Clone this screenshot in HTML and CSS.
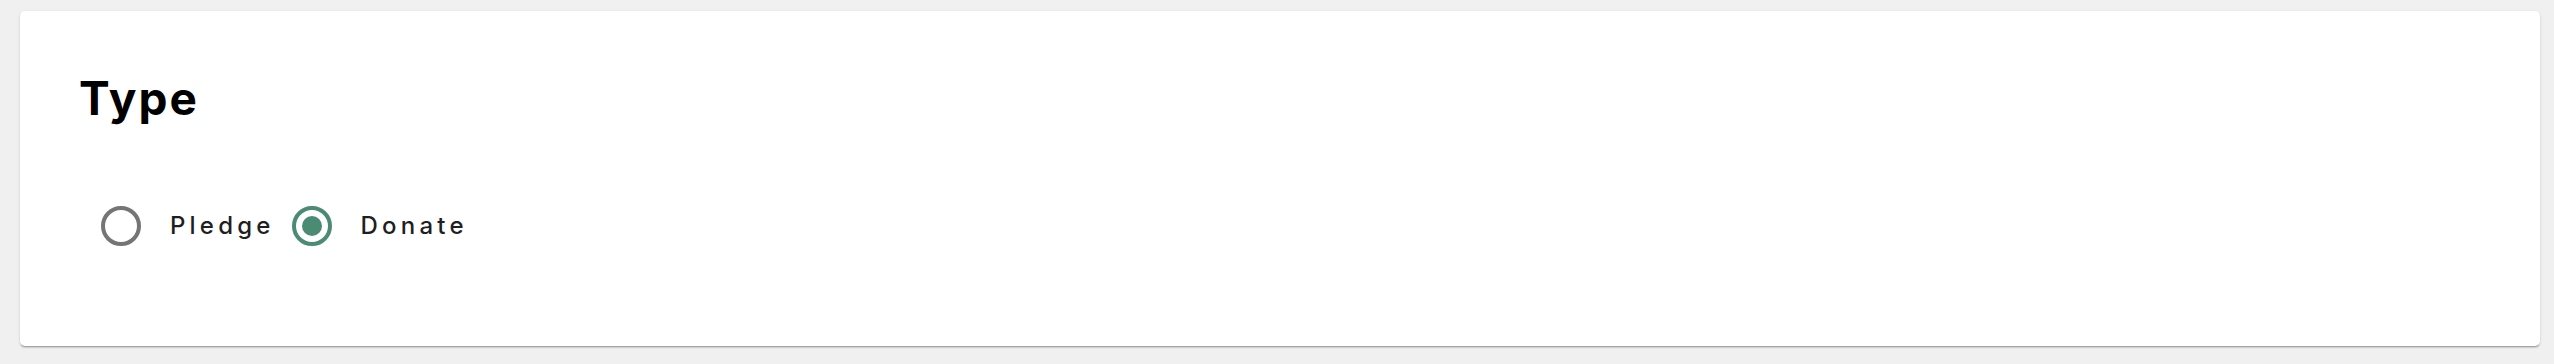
FILE: index.html
```html
<!DOCTYPE html>
<html lang="en">
<head>
<meta charset="utf-8">
<title>Type</title>
<link rel="stylesheet" href="styles.css">
</head>
<body>
<div class="page">
  <section class="card">
    <h2 class="title">Type</h2>
    <div class="radio-group" role="radiogroup">
      <label class="option">
        <svg class="radio" viewBox="0 0 48 48" width="48" height="48" aria-hidden="true">
          <circle cx="24" cy="24" r="18" fill="none" stroke="#757575" stroke-width="4"/>
        </svg>
        <span class="label">Pledge</span>
      </label>
      <label class="option">
        <svg class="radio" viewBox="0 0 48 48" width="48" height="48" aria-hidden="true">
          <circle cx="24" cy="24" r="18" fill="none" stroke="#4a8b74" stroke-width="4"/>
          <circle cx="24" cy="24" r="10" fill="#4a8b74"/>
        </svg>
        <span class="label">Donate</span>
      </label>
    </div>
  </section>
</div>
</body>
</html>
```
FILE: styles.css
```css
html, body {
  margin: 0;
  padding: 0;
  background: #f0f0f0;
}
.page {
  padding: 11px 14px 18px 20px;
}
.card {
  box-sizing: border-box;
  height: 335px;
  background: #ffffff;
  border-radius: 5px;
  box-shadow: 0 2px 2px -1px rgba(0,0,0,0.35), 0 1px 3px 0 rgba(0,0,0,0.12);
  padding: 59px 60px 0 59px;
}
.title {
  margin: 0 0 80px 0;
  font-family: Inter, "DejaVu Sans", sans-serif;
  font-weight: 700;
  font-size: 46px;
  line-height: 56px;
  color: #000000;
  letter-spacing: 2px;
}
.radio-group {
  display: flex;
  align-items: center;
  margin-left: 18px;
  height: 40px;
}
.option {
  display: flex;
  align-items: center;
  margin-right: 13px;
}
.radio {
  display: block;
  flex: none;
  margin-right: 25px;
}
.label {
  font-family: Inter, "DejaVu Sans", sans-serif;
  font-size: 24px;
  font-weight: 500;
  line-height: 40px;
  color: #1f1f1f;
  letter-spacing: 4.2px;
}
```
